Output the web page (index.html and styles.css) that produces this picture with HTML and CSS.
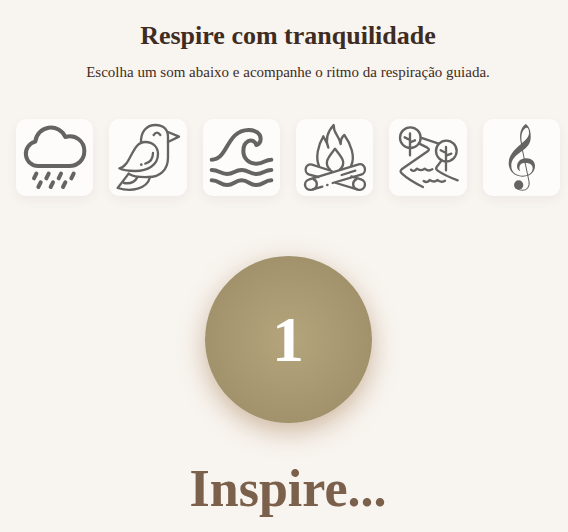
FILE: index.html
```html
<!DOCTYPE html>
<html lang="pt-BR">
<head>
<meta charset="utf-8">
<meta name="viewport" content="width=device-width, initial-scale=1">
<title>Respire com tranquilidade</title>
<link rel="stylesheet" href="styles.css">
</head>
<body>
<main class="page">
  <header class="intro">
    <h1 class="title">Respire com tranquilidade</h1>
    <p class="lead">Escolha um som abaixo e acompanhe o ritmo da respiração guiada.</p>
  </header>
  <div class="sounds">
    <button class="sound" type="button" aria-label="Chuva">
      <svg viewBox="24 27 232 232" stroke-width="12">
        <path d="M91 168A37 37 0 0 1 82 95A47 47 0 0 1 172 81C203 72 229 94 229 123C229 149 210 168 184 168Z"/>
        <path d="M85 191L78 205M122 191L115 205M159 191L152 205M197 191L190 205M98 217L91 231M135 217L128 231M172 217L165 231"/>
      </svg>
    </button>
    <button class="sound" type="button" aria-label="Pássaros">
      <svg viewBox="25 27 232 232" stroke-width="7">
        <path d="M121 98C120 65 137 45 165 45C188 45 202 59 202 80V143C202 181 176 201 144 201C116 202 96 199 84 191"/>
        <path d="M202 66L235 80L202 96M159 75Q169 61 179 75"/>
        <path d="M56 175C93 167 92 96 134 96C158 96 172 112 172 132C172 166 140 183 104 183C85 183 66 181 56 175Z"/>
        <path d="M157 129C157 146 148 157 134 161"/>
        <path d="M84 191L51 234C91 246 139 238 148 202M70 219C89 222 102 217 110 202"/>
        <circle class="solid" cx="122" cy="164" r="4"/>
      </svg>
    </button>
    <button class="sound" type="button" aria-label="Mar">
      <svg viewBox="27 27 232 232" stroke-width="12">
        <path d="M53 149C103 149 96 61 164 60C185 60 200 71 200 86C200 96 195 102 187 105C183 92 171 89 162 94C151 100 148 111 148 123C148 145 164 161 187 161C211 161 212 149 232 149"/>
        <path d="M53 180C76 180 78 192 99 192C120 192 122 180 143 180C164 180 166 192 187 192C208 192 211 180 232 180M53 211C76 211 78 225 99 225C120 225 122 211 143 211C164 211 166 225 187 225C208 225 211 211 232 211"/>
      </svg>
    </button>
    <button class="sound" type="button" aria-label="Fogueira">
      <svg viewBox="24 27 232 232" stroke-width="7">
        <path d="M93 168C82 143 90 106 106 79C110 89 118 97 121 113C111 88 117 67 137 45C136 73 153 74 158 102C158 88 161 81 169 75C188 101 203 140 189 168"/>
        <path d="M126 179C104 157 125 138 141 116C156 138 180 157 155 179"/>
        <path d="M103 230L72 239C48 244 44 213 64 208L212 163C232 158 239 188 219 194L134 219"/>
        <path d="M131 183L72 164C52 158 45 189 64 194L91 201M144 219L210 239C232 244 239 214 219 208L190 199"/>
        <path d="M77 208A16 16 0 0 1 75 238M205 208A16 16 0 0 0 207 238M161 195L202 182"/>
        <circle class="solid" cx="118" cy="225" r="4"/>
      </svg>
    </button>
    <button class="sound" type="button" aria-label="Rio">
      <svg viewBox="25 27 232 232" stroke-width="7">
        <circle cx="89" cy="83" r="31"/><circle cx="197" cy="123" r="31"/>
        <path d="M88 70V136M72 82L88 90M88 97L103 91M196 111V181M180 121L196 129M196 137L212 131"/>
        <path d="M120 83L174 101M116 101L140 113Q149 118 141 124L63 178Q56 184 64 191C81 207 102 219 127 231M183 151L168 171Q164 177 171 182C188 194 209 203 231 211"/>
        <path d="M91 179C99 187 105 180 109 176C115 181 123 182 132 176C139 183 148 182 155 178M129 213C137 219 143 215 147 210C155 215 163 217 170 210C178 217 187 216 193 212"/>
      </svg>
    </button>
    <button class="sound" type="button" aria-label="Música">
      <svg viewBox="30 27 232 232" stroke-width="3">
        <path class="solid" fill-rule="evenodd" d="M158 42C143 53 137 74 144 102C119 123 107 139 107 160C107 184 126 201 150 200C173 199 186 185 186 168C186 153 174 144 158 145C142 146 132 156 132 169C132 176 136 182 142 184C137 176 138 160 153 159C170 157 179 164 179 174C179 189 167 197 148 197C127 197 114 184 115 166C115 149 126 137 152 119C169 106 174 94 173 77C173 60 167 48 158 42ZM158 54C164 51 168 57 168 68C168 80 160 88 147 99C142 78 147 61 158 54Z"/>
        <path d="M148 119L168 214C171 231 161 241 148 241Q139 241 131 235"/>
        <circle class="solid" cx="137" cy="225" r="14"/>
      </svg>
    </button>
  </div>
  <section class="breath" aria-live="polite">
    <div class="circle">1</div>
    <p class="phase">Inspire...</p>
  </section>
</main>
</body>
</html>
```
FILE: styles.css
```css
* {
  box-sizing: border-box;
}

body {
  margin: 0;
  background: #f8f4ef;
  color: #3e2c23;
  font-family: "Liberation Serif", serif;
}

.page {
  padding: 20px 8px 0 16px;
}

.intro {
  text-align: center;
}

.title {
  margin: 0;
  font-size: 26px;
  line-height: 32px;
}

.lead {
  margin: 8px 0 0;
  font-size: 15px;
  line-height: 24px;
}

.sounds {
  display: grid;
  grid-template-columns: repeat(6, 1fr);
  gap: 16px;
  margin-top: 35px;
}

.sound {
  display: block;
  padding: 0;
  border: 0;
  border-radius: 10px;
  background: #fdfcfa;
  box-shadow: 0 4px 12px rgba(62, 44, 35, 0.05);
  cursor: pointer;
}

.sound svg {
  display: block;
  width: 100%;
  aspect-ratio: 1;
  fill: none;
  stroke: #656462;
  stroke-linecap: round;
  stroke-linejoin: round;
}

.sound .solid {
  fill: #656462;
  stroke: none;
}

.breath {
  display: flex;
  flex-direction: column;
  align-items: center;
  margin-top: 60px;
}

.circle {
  display: grid;
  place-items: center;
  width: 167px;
  height: 167px;
  border-radius: 50%;
  background: radial-gradient(circle, #b5a57c, #a0916b 75%);
  box-shadow: 0 8px 24px rgba(166, 124, 82, 0.5);
  color: #fff;
  font-weight: bold;
  font-size: 64px;
  line-height: 72px;
}

.phase {
  margin: 34px 0 0;
  color: #7b604b;
  font-weight: bold;
  font-size: 52px;
  line-height: 64px;
}
```
